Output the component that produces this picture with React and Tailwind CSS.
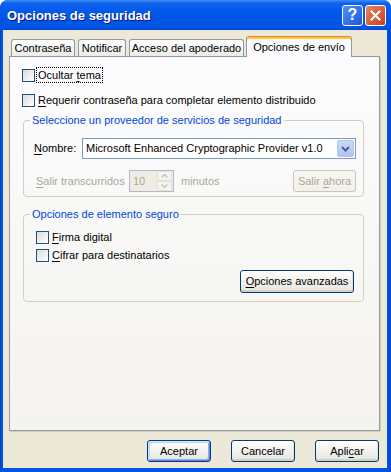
import React from "react";

const F = "font-['Liberation_Sans',Arial,sans-serif]";

function U({ children }) {
  return <span className="underline decoration-1 underline-offset-[2px]">{children}</span>;
}

function Check() {
  return (
    <span className="block w-[13px] h-[13px] shrink-0 border border-[#1C5180] bg-linear-to-br from-[#DCDCD7] to-white" />
  );
}

function Tab({ children, className }) {
  return (
    <div
      className={`h-[17px] flex items-center justify-center border border-b-0 border-[#919B9C] rounded-t-[3px] bg-linear-to-b from-white to-[#ECEBE6] ${className}`}
    >
      {children}
    </div>
  );
}

function Btn({ children, className = "", def = false, disabled = false }) {
  const base =
    "flex items-center justify-center rounded-[3px] border bg-linear-to-b";
  const st = disabled
    ? "border-[#C9C7BA] text-[#ACA899] from-[#F7F6F1] to-[#F1F0EA]"
    : "border-[#003C74] text-black from-white to-[#E6E4DC]";
  const sh = def
    ? "shadow-[inset_1px_1px_0_#CEE7FF,inset_-1px_-1px_0_#6982EE,inset_2px_2px_0_#BCD4F6,inset_-2px_-2px_0_#89ADE4]"
    : disabled
    ? ""
    : "shadow-[inset_0_-2px_0_#D6D0C5,inset_-1px_0_0_#E3E0D6]";
  return (
    <div className={`${base} ${st} ${sh} ${className}`}>
      <span>{children}</span>
    </div>
  );
}

export default function App() {
  return (
    <div className={`w-[391px] h-[472px] bg-white ${F} text-[11px] leading-[13px] text-black`}>
      <div className="w-full h-full flex flex-col rounded-t-[8px] overflow-hidden bg-[linear-gradient(to_right,#0042C8_0px,#0055E5_2px,#0055E5_388px,#0042C8_391px)]">
        {/* Title bar */}
        <div className="h-[30px] shrink-0 flex items-center pl-[7px] pr-[5px] bg-[linear-gradient(to_bottom,#3D8EF8_0%,#0F64EE_10%,#0258E8_40%,#0054E3_75%,#0157E8_90%,#0046D4_100%)]">
          <span className="flex-1 text-white font-bold text-[13px] leading-[16px] font-['Trebuchet_MS','Liberation_Sans',Arial,sans-serif] [text-shadow:1px_1px_0_#0A1883] mt-[1px]">
            Opciones de seguridad
          </span>
          <div className="w-[21px] h-[21px] rounded-[3px] border border-white bg-linear-to-br from-[#4C93FA] to-[#1F55DA] flex items-center justify-center text-white font-bold text-[16px] leading-[16px] font-['Liberation_Sans',Arial,sans-serif]">
            ?
          </div>
          <div className="ml-[2px] w-[21px] h-[21px] rounded-[3px] border border-white bg-linear-to-br from-[#E98363] to-[#C73C17] flex items-center justify-center">
            <svg width="11" height="11" viewBox="0 0 11 11">
              <path d="M1.5 1.5 L9.5 9.5 M9.5 1.5 L1.5 9.5" stroke="white" strokeWidth="2" strokeLinecap="square" />
            </svg>
          </div>
        </div>

        {/* Body */}
        <div className="flex-1 ml-[3px] mr-[4px] mb-[4px] bg-[#ECE9D8] flex flex-col pl-[6px] pr-[7px]">
          {/* Tabs */}
          <div className="flex items-end h-[20px] mt-[6px] pl-[2px]">
            <Tab className="w-[64px] mr-[3px]">Contraseña</Tab>
            <Tab className="w-[48px] mr-[3px]">Notificar</Tab>
            <Tab className="w-[115px] mr-[2px]">Acceso del apoderado</Tab>
            <div className="relative z-10 h-[21px] -mb-[1px] w-[106px] flex items-center justify-center border-x border-t border-[#919B9C] border-t-[#E68B2C] rounded-t-[3px] bg-[#FCFCFE] shadow-[inset_0_2px_0_#FFC73C]">
              <span className="mt-[1px]">Opciones de envío</span>
            </div>
          </div>

          {/* Panel */}
          <div className="h-[375px] w-[371px] border border-[#919B9C] bg-linear-to-b from-[#FCFCFE] to-[#F4F3EE] shadow-[1px_1px_0_#D0CEC2] pl-[12px] flex flex-col">
            <div className="flex items-center h-[16px] mt-[10px]">
              <Check />
              <span className="ml-[2px] px-[1px] outline outline-1 outline-dotted outline-black leading-[14px]">
                Ocultar <U>t</U>ema
              </span>
            </div>
            <div className="flex items-center h-[16px] mt-[9px]">
              <Check />
              <span className="ml-[3px]">
                <U>R</U>equerir contraseña para completar elemento distribuido
              </span>
            </div>

            {/* Group 1 */}
            <fieldset className="w-[341px] ml-[1px] mt-[6px] border border-[#D0D0BF] rounded-[4px] p-0 m-0">
              <legend className="ml-[6px] px-[2px] text-[#0046D5] leading-[13px]">
                Seleccione un proveedor de servicios de seguridad
              </legend>
              <div className="pt-[11px] pl-[10px] pr-[6px] pb-[4px] flex flex-col">
                <div className="flex items-center h-[21px]">
                  <span className="w-[48px]">
                    <U>N</U>ombre:
                  </span>
                  <div className="w-[274px] h-[21px] border border-[#7F9DB9] bg-white flex items-center pl-[3px]">
                    <span className="flex-1">Microsoft Enhanced Cryptographic Provider v1.0</span>
                    <div className="w-[17px] h-[17px] mr-[1px] rounded-[2px] border border-[#B5C6EE] bg-linear-to-b from-[#CAD9FB] to-[#AEC3F6] flex items-center justify-center">
                      <svg width="9" height="6" viewBox="0 0 9 6">
                        <path d="M1 1 L4.5 4.5 L8 1" stroke="#4D6185" strokeWidth="2" fill="none" />
                      </svg>
                    </div>
                  </div>
                </div>
                <div className="flex items-center h-[22px] mt-[11px]">
                  <span className="w-[93px] ml-[2px] text-[#ACA899]">
                    <U>S</U>alir transcurridos
                  </span>
                  <div className="w-[45px] h-[22px] border border-[#AFBBCB] bg-[#EFEDE3] flex items-center">
                    <span className="flex-1 pl-[3px] text-[#ACA899]">10</span>
                    <div className="w-[15px] h-[20px] mr-[1px] flex flex-col">
                      <div className="h-[10px] rounded-[1px] border border-[#E4E2D8] bg-[#F4F3EE] flex items-center justify-center">
                        <svg width="7" height="4" viewBox="0 0 7 4">
                          <path d="M0.5 3.5 L3.5 0.5 L6.5 3.5" stroke="#C9C7BA" strokeWidth="1.5" fill="none" />
                        </svg>
                      </div>
                      <div className="h-[10px] rounded-[1px] border border-[#E4E2D8] bg-[#F4F3EE] flex items-center justify-center">
                        <svg width="7" height="4" viewBox="0 0 7 4">
                          <path d="M0.5 0.5 L3.5 3.5 L6.5 0.5" stroke="#C9C7BA" strokeWidth="1.5" fill="none" />
                        </svg>
                      </div>
                    </div>
                  </div>
                  <span className="ml-[7px] flex-1 text-[#ACA899]">minutos</span>
                  <Btn disabled className="w-[63px] h-[22px] mr-[1px]">
                    Salir <U>a</U>hora
                  </Btn>
                </div>
              </div>
            </fieldset>

            {/* Group 2 */}
            <fieldset className="w-[341px] ml-[1px] mt-[11px] border border-[#D0D0BF] rounded-[4px] p-0 m-0">
              <legend className="ml-[6px] px-[2px] text-[#0046D5] leading-[13px]">
                Opciones de elemento seguro
              </legend>
              <div className="pt-[8px] pl-[12px] pr-[9px] pb-[8px] flex flex-col">
                <div className="flex items-center h-[16px]">
                  <Check />
                  <span className="ml-[3px]">
                    <U>F</U>irma digital
                  </span>
                </div>
                <div className="flex items-center h-[16px] mt-[2px]">
                  <Check />
                  <span className="ml-[3px]">
                    <U>C</U>ifrar para destinatarios
                  </span>
                </div>
                <div className="flex justify-end mt-[7px]">
                  <Btn className="w-[114px] h-[23px]">
                    <U>O</U>pciones avanzadas
                  </Btn>
                </div>
              </div>
            </fieldset>
          </div>

          {/* Bottom buttons */}
          <div className="flex justify-end gap-[20px] mt-[9px] mr-[1px]">
            <Btn def className="w-[64px] h-[22px]">Aceptar</Btn>
            <Btn className="w-[64px] h-[22px]">Cancelar</Btn>
            <Btn className="w-[64px] h-[22px]">
              Apli<U>c</U>ar
            </Btn>
          </div>
        </div>
      </div>
    </div>
  );
}
